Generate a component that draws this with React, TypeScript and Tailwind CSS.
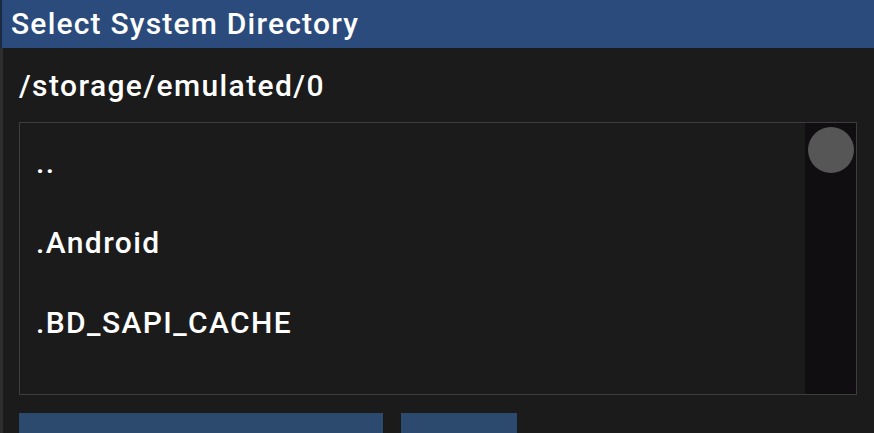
import React from "react";

export default function App() {
  const items = ["..", ".Android", ".BD_SAPI_CACHE"];
  return (
    <div
      className="w-[874px] h-[433px] overflow-hidden bg-[#1b1b1b] flex flex-col text-white"
      style={{ fontFamily: "Roboto, 'Noto Sans', sans-serif" }}
    >
      <div className="h-[48px] shrink-0 bg-[#2a4b7b] border-l-2 border-[#1a2a40] flex items-center pl-[9px] text-[30px] font-medium tracking-[1.2px] leading-none">
        Select System Directory
      </div>
      <div className="flex-1 flex flex-col border-l-[3px] border-[#2e2e2e] relative">
        <div className="h-[74px] shrink-0 flex items-center pl-[16px] text-[30px] font-medium tracking-[1.4px] leading-none pt-[1px]">
          /storage/emulated/0
        </div>
        <div className="ml-[16px] mr-[17px] h-[273px] shrink-0 border border-[#3d3d3d] flex">
          <div className="flex-1 flex flex-col">
            {items.map((t) => (
              <div key={t} className="h-[80px] flex items-center pl-[16px] text-[30px] font-medium tracking-[1.4px] leading-none">
                {t}
              </div>
            ))}
          </div>
          <div className="w-[51px] bg-[#110e11] flex justify-center pt-[4px]">
            <div className="w-[46px] h-[46px] rounded-full bg-[#565656]" />
          </div>
        </div>
        <div className="flex gap-[18px] pl-[16px] mt-[18px]">
          <div className="w-[364px] h-[40px] bg-[#2b4a6e]" />
          <div className="w-[116px] h-[40px] bg-[#2b4a6e]" />
        </div>
      </div>
    </div>
  );
}
